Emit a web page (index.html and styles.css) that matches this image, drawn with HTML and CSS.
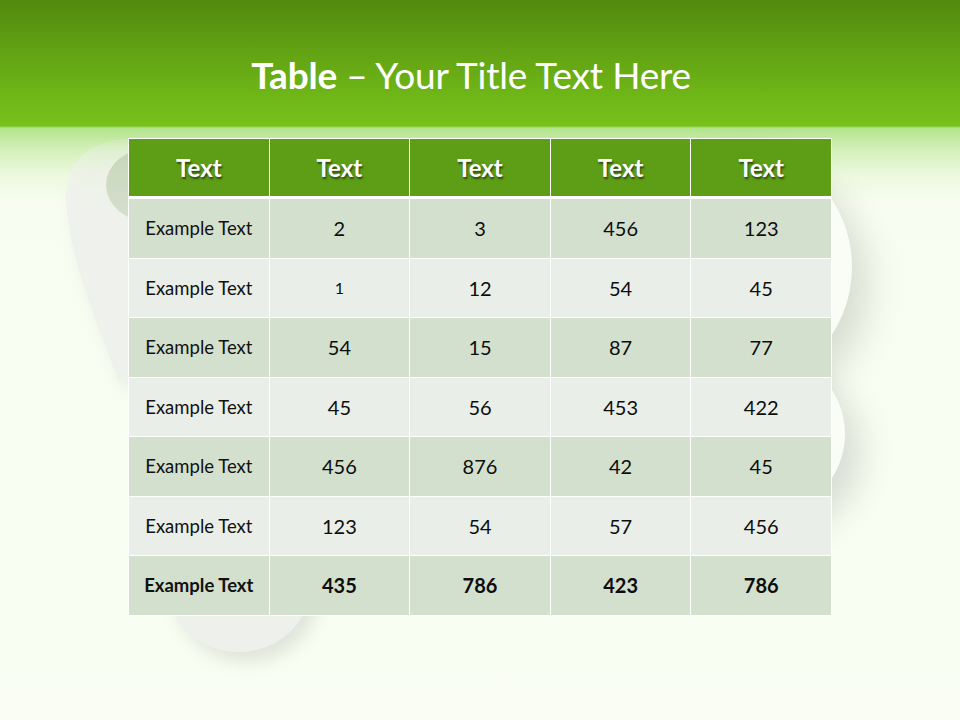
FILE: index.html
```html
<!DOCTYPE html>
<html>
<head>
<meta charset="utf-8">
<link rel="stylesheet" href="styles.css">
</head>
<body>
<div class="slide">
  <div class="deco">
    <svg class="blob-svg" width="960" height="720" viewBox="0 0 960 720">
      <defs>
        <linearGradient id="lg" x1="0" y1="0" x2="0" y2="1">
          <stop offset="0" stop-color="#eef1ea" stop-opacity="0.2"/>
          <stop offset="0.15" stop-color="#eef1ea" stop-opacity="0.75"/>
          <stop offset="0.3" stop-color="#eff1ed"/>
          <stop offset="1" stop-color="#eff1ed"/>
        </linearGradient>
        <filter id="sh" x="-30%" y="-30%" width="160%" height="160%">
          <feDropShadow dx="5" dy="8" stdDeviation="7" flood-color="#000" flood-opacity="0.06"/>
        </filter>
      </defs>
      <path d="M210,380 L210,139 L132,139 C92,139 66,158 66,198 C68,252 92,312 118,380 Z" fill="url(#lg)" filter="url(#sh)"/>
    </svg>
    <div class="blob blob-left-inner"></div>
    <div class="blob blob-bottom"></div>
    <div class="blob blob-right-1"></div>
    <div class="blob blob-right-2"></div>
  </div>
  <header class="title-bar">
    <h1 class="title"><span class="title-strong">Table</span> – Your Title Text Here</h1>
  </header>
  <div class="table">
    <div class="cell head">Text</div>
    <div class="cell head">Text</div>
    <div class="cell head">Text</div>
    <div class="cell head">Text</div>
    <div class="cell head">Text</div>

    <div class="cell odd label">Example Text</div>
    <div class="cell odd">2</div>
    <div class="cell odd">3</div>
    <div class="cell odd">456</div>
    <div class="cell odd">123</div>

    <div class="cell even label">Example Text</div>
    <div class="cell even small">1</div>
    <div class="cell even">12</div>
    <div class="cell even">54</div>
    <div class="cell even">45</div>

    <div class="cell odd label">Example Text</div>
    <div class="cell odd">54</div>
    <div class="cell odd">15</div>
    <div class="cell odd">87</div>
    <div class="cell odd">77</div>

    <div class="cell even label">Example Text</div>
    <div class="cell even">45</div>
    <div class="cell even">56</div>
    <div class="cell even">453</div>
    <div class="cell even">422</div>

    <div class="cell odd label">Example Text</div>
    <div class="cell odd">456</div>
    <div class="cell odd">876</div>
    <div class="cell odd">42</div>
    <div class="cell odd">45</div>

    <div class="cell even label">Example Text</div>
    <div class="cell even">123</div>
    <div class="cell even">54</div>
    <div class="cell even">57</div>
    <div class="cell even">456</div>

    <div class="cell odd label total">Example Text</div>
    <div class="cell odd total">435</div>
    <div class="cell odd total">786</div>
    <div class="cell odd total">423</div>
    <div class="cell odd total">786</div>
  </div>
</div>
</body>
</html>
```

FILE: styles.css
```css
html, body {
  margin: 0;
  padding: 0;
}

body {
  width: 960px;
  height: 720px;
  overflow: hidden;
  font-family: Lato, "Open Sans", sans-serif;
}

.slide {
  position: relative;
  width: 960px;
  height: 720px;
  overflow: hidden;
  background: linear-gradient(to bottom,
    #528a0e 0px,
    #5e9d12 40px,
    #6fb617 95px,
    #77c11a 126px,
    #b3e48a 128px,
    #d4f0bb 150px,
    #ecf9df 175px,
    #f8fdf1 205px,
    #f9fdf3 720px);
}

.deco {
  position: absolute;
  inset: 0;
}

.blob-svg {
  position: absolute;
  left: 0;
  top: 0;
}

.blob {
  position: absolute;
  border-radius: 50%;
}

.blob-left-inner {
  left: 106px;
  top: 148px;
  width: 90px;
  height: 74px;
  background: linear-gradient(to bottom, #c6d9b7 0%, #d0dcc7 60%, #d4dfcd 100%);
}

.blob-bottom {
  left: 168px;
  top: 520px;
  width: 142px;
  height: 132px;
  background: #eef0ec;
  box-shadow: 8px 10px 18px rgba(0,0,0,0.10);
}

.blob-right-1 {
  left: 604px;
  top: 143px;
  width: 248px;
  height: 248px;
  background: #fafcf6;
  box-shadow: 16px 18px 36px rgba(0,0,0,0.13);
}

.blob-right-2 {
  left: 683px;
  top: 353px;
  width: 162px;
  height: 162px;
  background: #fafcf6;
  box-shadow: 16px 18px 34px rgba(0,0,0,0.13);
}

.title-bar {
  position: relative;
  height: 138px;
  display: flex;
  justify-content: center;
}

.title {
  margin: 53px 18px 0 0;
  font-size: 37px;
  line-height: 44px;
  font-weight: 400;
  color: #ffffff;
  letter-spacing: -0.2px;
}

.title-strong {
  font-weight: 700;
}

.table {
  position: relative;
  width: 702px;
  margin: 0 auto;
  display: grid;
  grid-template-columns: repeat(5, 1fr);
  grid-template-rows: 59px repeat(7, 58.5px);
  column-gap: 1px;
  row-gap: 1px;
  border: 1px solid rgba(255,255,255,0.9);
  background: #ffffff;
}

.cell {
  display: flex;
  align-items: center;
  justify-content: center;
  font-size: 20px;
  color: #0d0d0d;
}

.head {
  background: #5e9d16;
  color: #ffffff;
  font-weight: 700;
  font-size: 24px;
  margin-bottom: 2px;
  text-shadow: 1px 2px 2px rgba(0,0,0,0.55);
}

.odd {
  background: #d3e0cd;
}

.even {
  background: #e9efe8;
}

.label {
  font-size: 18.5px;
  color: #111111;
}

.small {
  font-size: 16px;
}

.total {
  font-weight: 700;
}
```
